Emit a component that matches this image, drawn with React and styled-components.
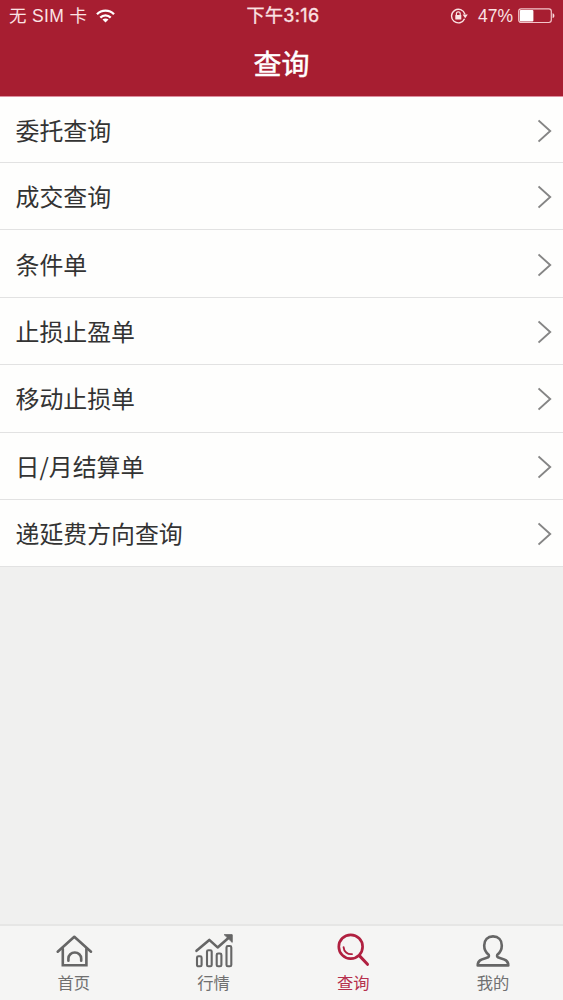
import styled, { createGlobalStyle } from 'styled-components'

const GlobalStyle = createGlobalStyle`
  * {
    box-sizing: border-box;
    margin: 0;
    padding: 0;
  }

  body {
    font-family: "Liberation Sans", "Noto Sans CJK SC", sans-serif;
    background-color: #f0f0ef;
  }
`

const Screen = styled.div`
  display: flex;
  flex-direction: column;
  height: 100vh;
  overflow: hidden;
`

const Header = styled.header`
  flex: none;
  height: 97px;
  background-color: #a71e31;
  border-bottom: 1px solid #dd8fa0;
  color: #fff;
`

const StatusBar = styled.div`
  display: grid;
  grid-template-columns: 1fr auto 1fr;
  align-items: center;
  height: 32px;
  padding: 0 8px 0 9px;
  font-size: 17.5px;
  line-height: 32px;
  color: #fbe3e4;
  white-space: nowrap;

  svg {
    display: block;
    flex: none;
  }
`

const Carrier = styled.div`
  display: flex;
  align-items: center;
  gap: 9px;
  letter-spacing: 0.35px;
`

const Clock = styled.div`
  margin-left: 2px;
  font-family: Inter, "Noto Sans CJK SC", sans-serif;
  font-size: 18px;
  letter-spacing: 0.35px;
  -webkit-text-stroke: 0.35px;
`

const Power = styled.div`
  display: flex;
  align-items: center;
  justify-content: flex-end;

  span {
    margin: 0 5px 0 9px;
  }
`

const Title = styled.h1`
  height: 64px;
  padding-top: 2px;
  font-size: 28px;
  font-weight: 400;
  line-height: 63px;
  text-align: center;
  -webkit-text-stroke: 0.5px;
`

const List = styled.ul`
  flex: none;
  list-style: none;
`

const Row = styled.li`
  display: flex;
  align-items: center;
  justify-content: space-between;
  height: 67.4px;
  padding: 0 11px 0 15.5px;
  background-color: #fefefd;
  border-bottom: 1.5px solid #e2e2e2;
  font-family: "Noto Sans CJK SC", sans-serif;
  font-size: 23.9px;
  line-height: 36px;
  color: #333;

  &:first-child {
    height: 66px;
  }

  svg {
    margin-top: 2px;
  }
`

const TabBar = styled.nav`
  display: flex;
  flex: none;
  height: 76px;
  margin-top: auto;
  padding-left: 4px;
  background-color: #f5f5f4;
  border-top: 2px solid #e6e6e5;
`

const Tab = styled.a`
  display: flex;
  flex: 1;
  flex-direction: column;
  align-items: center;
  padding-top: 6px;
  font-size: 16.3px;
  line-height: 24px;
  color: ${props => props.$active ? '#b5304d' : '#707070'};

  svg {
    margin-bottom: 2px;
    color: ${props => props.$active ? '#b02040' : '#666'};
  }
`

function WifiIcon() {
  return (
    <svg width="19" height="14" viewBox="0 0 19 14" fill="none" stroke="#fff" strokeWidth="2.3">
      <path d="M1 5.3C5.6.5 13.4.5 18 5.3" />
      <path d="M4.3 8.6c2.9-2.9 7.5-2.9 10.4 0" />
      <path d="M9.5 13.5 6.5 10.6c1.7-1.5 4.3-1.5 6 0Z" fill="#fff" stroke="none" />
    </svg>
  )
}

function RotationLockIcon() {
  return (
    <svg width="19" height="16" viewBox="0 0 19 16" fill="none" stroke="#fbe3e4" strokeWidth="1.4">
      <path d="M14.6 10.8A6.8 6.8 0 1 1 14.9 6.2" />
      <path d="M12.6 6.6h5.2l-2.6 3.6Z" fill="#fbe3e4" stroke="none" />
      <path d="M6.4 7.2V5.7a1.9 1.9 0 0 1 3.8 0v1.5" strokeWidth="1.2" />
      <rect x="5.3" y="7" width="6" height="4.6" rx=".5" fill="#fbe3e4" stroke="none" />
    </svg>
  )
}

function BatteryIcon() {
  return (
    <svg width="37" height="16" viewBox="0 0 37 16" fill="none">
      <rect x=".7" y=".9" width="32.6" height="13.6" rx="2.4" stroke="#f3c5ca" strokeWidth="1.2" />
      <rect x="1.8" y="2" width="13.6" height="11.4" rx="1" fill="#fff" />
      <path d="M34.6 5.3c2.4.5 2.4 4.3 0 4.8Z" fill="#f8d8dc" />
    </svg>
  )
}

function ChevronIcon() {
  return (
    <svg width="14" height="24" viewBox="0 0 14 24" fill="none" stroke="#858585" strokeWidth="1.9">
      <path d="M.5 1.5 12.2 12 .5 22.5" />
    </svg>
  )
}

function TabIcon({ children }) {
  return (
    <svg
      width="40"
      height="37"
      viewBox="0 0 40 37"
      fill="none"
      stroke="currentColor"
      strokeWidth="2.6"
      strokeLinecap="round"
      strokeLinejoin="round"
    >
      {children}
    </svg>
  )
}

function HomeIcon() {
  return (
    <TabIcon>
      <path d="M3.7 19.7 20.3 4.8 37 19.7" />
      <path d="M8.8 17v16.2h23.6V17" strokeLinejoin="miter" />
      <path d="M14.4 28.8v-2.2a6.4 6.1 0 0 1 12.8 0v2.2" />
    </TabIcon>
  )
}

function MarketIcon() {
  return (
    <TabIcon>
      <path d="M2.5 18.8 15.3 7.9l8.3 7.5L35.8 4.7" />
      <path d="M30.6 2.7h7.6V10Z" fill="currentColor" strokeWidth="1" />
      <rect x="3" y="24.3" width="4.6" height="10" rx="1.4" strokeWidth="2.1" />
      <rect x="13" y="18.2" width="4.7" height="16.1" rx="1.4" strokeWidth="2.1" />
      <rect x="22.7" y="21.5" width="4.7" height="12.8" rx="1.4" strokeWidth="2.1" />
      <rect x="32.5" y="14" width="4.8" height="20.3" rx="1.4" strokeWidth="2.1" />
    </TabIcon>
  )
}

function SearchIcon() {
  return (
    <TabIcon>
      <circle cx="17.7" cy="14.7" r="11.9" strokeWidth="2.7" />
      <path d="m26.6 23.9 7.9 8.4" strokeWidth="3" />
      <path d="M10.6 15.2c.2 4.2 3.9 7.4 8.4 6.9" strokeWidth="1.9" />
    </TabIcon>
  )
}

function UserIcon() {
  return (
    <TabIcon>
      <path d="M15.7 22.7c-2.9-2.2-4.5-5.5-4.5-9.3 0-5.6 3.4-9 8.8-9s8.8 3.4 8.8 9c0 3.8-1.6 7.1-4.5 9.3-.7 1.7.1 2.5 2 3.1 4.7 1.4 9 2.1 9 7.6H4.7c0-5.5 4.3-6.2 9-7.6 1.9-.6 2.7-1.4 2-3.1Z" />
    </TabIcon>
  )
}

const items = ['委托查询', '成交查询', '条件单', '止损止盈单', '移动止损单', '日/月结算单', '递延费方向查询']

const tabs = [
  { label: '首页', Icon: HomeIcon },
  { label: '行情', Icon: MarketIcon },
  { label: '查询', Icon: SearchIcon, active: true },
  { label: '我的', Icon: UserIcon },
]

function App() {
  return (
    <Screen>
      <GlobalStyle />
      <Header>
        <StatusBar>
          <Carrier>无 SIM 卡<WifiIcon /></Carrier>
          <Clock>下午3:16</Clock>
          <Power>
            <RotationLockIcon />
            <span>47%</span>
            <BatteryIcon />
          </Power>
        </StatusBar>
        <Title>查询</Title>
      </Header>
      <List>
        {items.map(item => (
          <Row key={item}><span>{item}</span><ChevronIcon /></Row>
        ))}
      </List>
      <TabBar>
        {tabs.map(({ label, Icon, active }) => (
          <Tab key={label} $active={active}><Icon />{label}</Tab>
        ))}
      </TabBar>
    </Screen>
  )
}

export default App
